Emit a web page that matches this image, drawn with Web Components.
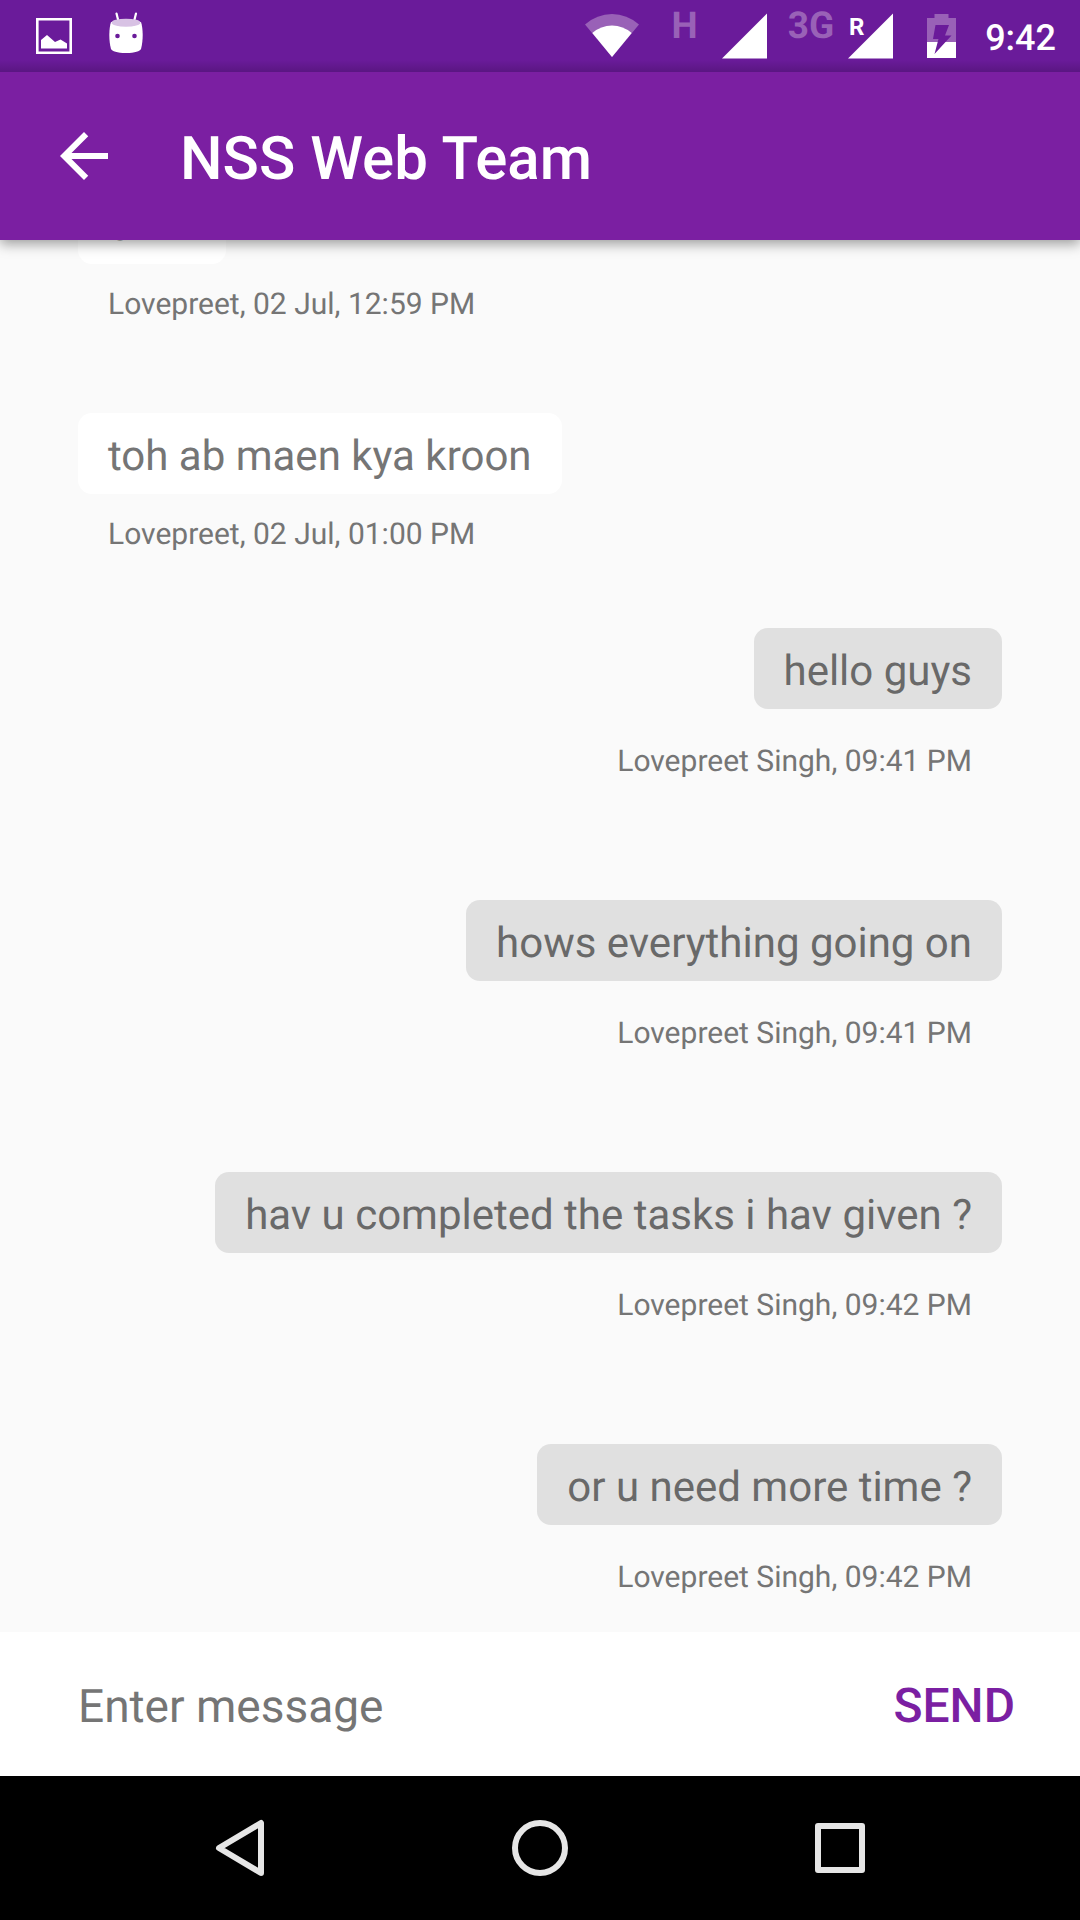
<!DOCTYPE html>
<html lang="en">
<head>
<meta charset="utf-8">
<meta name="viewport" content="width=device-width, initial-scale=1">
<title>NSS Web Team</title>
<style>
  html, body { margin: 0; height: 100%; }
  body { font-family: Roboto, "Noto Sans", sans-serif; background: #fafafa; color: #757575; text-rendering: geometricPrecision; }
</style>
</head>
<body>
<chat-screen>
  <status-bar slot="status" time="9:42"></status-bar>
  <app-bar slot="header">NSS Web Team</app-bar>
  <chat-message meta="Lovepreet, 02 Jul, 12:59 PM">okkk</chat-message>
  <chat-message meta="Lovepreet, 02 Jul, 01:00 PM">toh ab maen kya kroon</chat-message>
  <chat-message own meta="Lovepreet Singh, 09:41 PM">hello guys</chat-message>
  <chat-message own meta="Lovepreet Singh, 09:41 PM">hows everything going on</chat-message>
  <chat-message own meta="Lovepreet Singh, 09:42 PM">hav u completed the tasks i hav given ?</chat-message>
  <chat-message own meta="Lovepreet Singh, 09:42 PM">or u need more time ?</chat-message>
  <message-composer slot="composer"></message-composer>
  <nav-bar slot="nav"></nav-bar>
</chat-screen>
<script>
const define = (name, markup, setup) => customElements.define(name, class extends HTMLElement {
  constructor() {
    super();
    this.attachShadow({ mode: 'open' }).innerHTML = markup;
  }
  connectedCallback() { if (setup) setup(this, this.shadowRoot); }
});

define('chat-screen', `
  <style>
    :host { display: flex; flex-direction: column; height: 100vh; overflow: hidden; }
    main { flex: 1; min-height: 0; overflow: hidden; display: flex; flex-direction: column; justify-content: flex-end; }
  </style>
  <slot name="status"></slot>
  <slot name="header"></slot>
  <main><slot></slot></main>
  <slot name="composer"></slot>
  <slot name="nav"></slot>
`);

define('status-bar', `
  <style>
    :host { display: flex; justify-content: space-between; height: 72px; box-sizing: border-box;
      padding: 0 24px 0 36px; color: #fff; flex: none;
      background: linear-gradient(#6a1b9a 60px, #5a1682 72px); }
    .group { display: flex; align-items: flex-start; }
    .notifications { gap: 36px; }
    svg { display: block; fill: #fff; }
    .network { font-size: 37px; font-weight: 700; line-height: 54px; color: #9961b7; }
    .wifi { margin-right: 33px; }
    .signal { margin-left: 24px; }
    .data { margin-left: 21px; }
    .roaming { margin-left: 14px; }
    .battery { margin-left: 33px; }
    time { margin-left: 29px; font-size: 36px; font-weight: 500; line-height: 76px; }
    .roam-letter { font-size: 24px; font-weight: 700; }
  </style>
  <div class="group notifications">
    <svg width="36" height="72" viewBox="0 0 36 72" role="img" aria-label="Screenshot saved">
      <path fill-rule="evenodd" d="M0 18h36v36H0zM2.600 20.600v30.800h30.800V20.600z"/>
      <path d="M5 48.500V40l6-5 8 7 5.500-2.500 6.500 4v5z"/>
    </svg>
    <svg width="36" height="72" viewBox="0 0 36 72" role="img" aria-label="Android notification">
      <path d="M8.500 13.500l2 8M28 13.500l-2 8" stroke="#fff" stroke-width="2.200" stroke-linecap="round"/>
      <path d="M3 22C1 28 .500 40 3 49c1 2 6 4 15 4s14-2 15-4c2.500-9 2-21 0-27z"/>
      <ellipse cx="18" cy="22.700" rx="14.500" ry="4" fill="#d8c2e4"/>
      <circle cx="9.500" cy="36" r="2.300" fill="#6a1b9a"/><circle cx="26.500" cy="36" r="2.300" fill="#6a1b9a"/>
    </svg>
  </div>
  <div class="group">
    <svg class="wifi" width="54" height="72" viewBox="0 0 54 72" role="img" aria-label="Wi-Fi">
      <path fill="#9961b7" d="M0 24.500Q12 14 27 14t27 10.500L27 57z"/>
      <path d="M7.300 33Q16 25.500 27 25.500T46.700 33L27 57z"/>
    </svg>
    <span class="network">H</span>
    <svg class="signal" width="45" height="72" viewBox="0 0 45 72" role="img" aria-label="Signal"><path d="M45 13.500v45H0z"/></svg>
    <span class="network data">3G</span>
    <svg class="roaming" width="46" height="72" viewBox="0 0 46 72" role="img" aria-label="Roaming signal">
      <path d="M45 13.500v45H0z"/><text class="roam-letter" x="1" y="35">R</text>
    </svg>
    <svg class="battery" width="29" height="72" viewBox="0 0 29 72" role="img" aria-label="Battery charging">
      <path fill="#9961b7" d="M7.500 14h14v4H29v24H0V18h7.500z"/><path d="M0 42h29v16H0z"/>
      <path fill="#6a1b9a" d="M8.500 25h13.500L18 35.500h6.500L7.500 54l4-15H6z"/>
    </svg>
    <time></time>
  </div>
`, (el, root) => { root.querySelector('time').textContent = el.getAttribute('time'); });

define('app-bar', `
  <style>
    :host { display: flex; align-items: center; height: 168px; flex: none; box-sizing: border-box; padding-left: 48px;
      background: #7b1fa2; color: #fff; box-shadow: 0 4px 12px rgba(0,0,0,.38); clip-path: inset(0 0 -30px 0); position: relative; }
    button { border: 0; padding: 0; margin: 0; background: none; display: block; }
    svg { display: block; }
    h1 { margin: 0 0 0 60px; padding-top: 6px; font-size: 60px; font-weight: 500; line-height: 72px; }
  </style>
  <button type="button" aria-label="Back">
    <svg width="72" height="72" viewBox="0 0 24 24"><path fill="#fff" d="M20 11H7.830l5.590-5.590L12 4l-8 8 8 8 1.410-1.410L7.830 13H20v-2z"/></svg>
  </button>
  <h1><slot></slot></h1>
`);

define('chat-message', `
  <style>
    :host { display: flex; flex-direction: column; align-items: flex-start; flex: none; padding: 0 78px 90px; }
    p { margin: 0; }
    .bubble { background: #fff; border-radius: 14px; padding: 19px 30px 13px; font-size: 42px; line-height: 49px; }
    .meta { padding: 23px 30px 0; font-size: 30px; line-height: 36px; }
    :host([own]) { align-items: flex-end; margin-top: -15px; padding-bottom: 135px; }
    :host([own]) .bubble { background: #e0e0e0; color: #696969; }
    :host([own]) .meta { padding-top: 35px; }
    :host(:last-of-type) { padding-bottom: 36px; }
  </style>
  <p class="bubble"><slot></slot></p>
  <p class="meta"></p>
`, (el, root) => { root.querySelector('.meta').textContent = el.getAttribute('meta'); });

define('message-composer', `
  <style>
    :host { display: block; flex: none; background: #fff; }
    form { display: flex; align-items: center; height: 144px; box-sizing: border-box; padding: 4px 65px 0 78px; margin: 0; }
    input { flex: 1; min-width: 0; border: 0; outline: 0; padding: 2px 0 0; margin: 0; background: none; font: 400 46px/60px Roboto, sans-serif; color: #212121; text-rendering: inherit; }
    input::placeholder { color: #757575; opacity: 1; }
    button { border: 0; padding: 0; background: none; color: #7b1fa2; font: 500 48px/60px Roboto, sans-serif; text-rendering: inherit; }
  </style>
  <form>
    <input type="text" placeholder="Enter message" aria-label="Enter message">
    <button type="button">SEND</button>
  </form>
`);

define('nav-bar', `
  <style>
    :host { display: block; flex: none; background: #000; }
    nav { display: flex; justify-content: center; align-items: center; height: 144px; gap: 228px; }
    button { border: 0; padding: 0; margin: 0; background: none; }
    svg { display: block; fill: none; stroke: #e6e6e6; stroke-width: 6; stroke-linejoin: round; }
  </style>
  <nav aria-label="System">
    <button type="button" aria-label="Back"><svg width="72" height="72" viewBox="0 0 72 72"><path d="M57 11v50L15 36z"/></svg></button>
    <button type="button" aria-label="Home"><svg width="72" height="72" viewBox="0 0 72 72"><circle cx="36" cy="36" r="25"/></svg></button>
    <button type="button" aria-label="Recent apps"><svg width="72" height="72" viewBox="0 0 72 72"><rect x="14" y="14" width="44" height="44"/></svg></button>
  </nav>
`);
</script>
</body>
</html>
